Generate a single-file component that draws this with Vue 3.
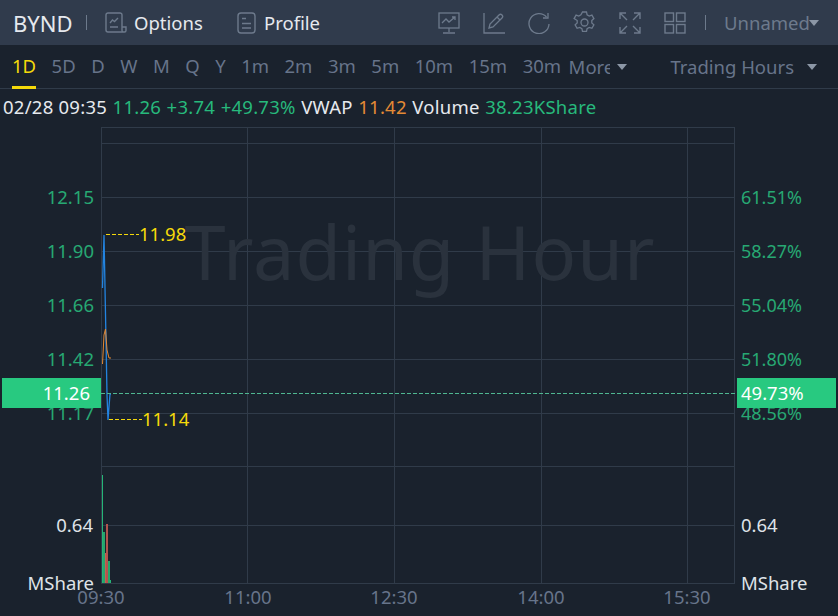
<script setup>
const periods = ['1D', '5D', 'D', 'W', 'M', 'Q', 'Y', '1m', '2m', '3m', '5m', '10m', '15m', '30m']

const hLines = [143, 197, 251, 305, 359, 413, 466, 525]
const vLines = [247, 394, 541, 687]

const leftLabels = [
  { text: '12.15', y: 197 },
  { text: '11.90', y: 251 },
  { text: '11.66', y: 305 },
  { text: '11.42', y: 359 },
  { text: '11.17', y: 413 },
]
const rightLabels = [
  { text: '61.51%', y: 197 },
  { text: '58.27%', y: 251 },
  { text: '55.04%', y: 305 },
  { text: '51.80%', y: 359 },
  { text: '48.56%', y: 413 },
]
const times = [
  { text: '09:30', x: 101 },
  { text: '11:00', x: 248 },
  { text: '12:30', x: 394 },
  { text: '14:00', x: 541 },
  { text: '15:30', x: 687 },
]
</script>

<template>
  <div class="page">
    <header class="topbar">
      <span class="symbol">BYND</span>
      <span class="sep"></span>
      <a class="tab tab-options">
        <svg width="22" height="22" viewBox="0 0 22 22" fill="none" stroke="#6d7a8c" stroke-width="1.4">
          <path d="M17 15V3a2 2 0 0 0-2-2H3a2 2 0 0 0-2 2v15a2 2 0 0 0 2 2h16.500a1.500 1.500 0 0 0 1.500-1.500V15h-4v3.500a1.500 1.500 0 0 0 1.500 1.500" />
          <path d="M5 11l2.500-3 2 1.500L13 6M5 15h8" />
        </svg>
        Options
      </a>
      <a class="tab tab-profile">
        <svg width="19" height="22" viewBox="0 0 19 22" fill="none" stroke="#6d7a8c" stroke-width="1.4">
          <rect x="1" y="1" width="17" height="20" rx="3" />
          <path d="M5 6.500h4M5 11.500h9M5 16h9" />
        </svg>
        Profile
      </a>
      <div class="tools">
        <svg class="t1" width="22" height="22" viewBox="0 0 22 22" fill="none" stroke="#6d7a8c" stroke-width="1.3">
          <rect x="1" y="1" width="20" height="15" />
          <path d="M4 11l4-4 3 3 6-5M14 5h3v3M11 16v4M5 21h12" />
        </svg>
        <svg class="t2" width="22" height="22" viewBox="0 0 22 22" fill="none" stroke="#6d7a8c" stroke-width="1.3">
          <path d="M1 1v20h21" />
          <path d="M6 16l1-4 9-9a1.800 1.800 0 0 1 3 3l-9 9zM14 5l3 3" />
        </svg>
        <svg class="t3" width="22" height="22" viewBox="0 0 22 22" fill="none" stroke="#6d7a8c" stroke-width="1.3">
          <path d="M18.500 5A10 10 0 1 0 21 12" />
          <path d="M20 1v5h-5" />
        </svg>
        <svg class="t4" width="23" height="23" viewBox="0 0 23 23" fill="none" stroke="#6d7a8c" stroke-width="1.3">
          <path d="M9.500 1h4l.6 2.800 2.100 1.200 2.700-.9 2 3.500-2.100 1.900v2.400l2.100 1.900-2 3.500-2.700-.9-2.100 1.200-.6 2.800h-4l-.6-2.800-2.100-1.200-2.700.9-2-3.500 2.100-1.900V9.500L1.100 7.600l2-3.500 2.700.9 2.100-1.200z" />
          <circle cx="11.500" cy="11.500" r="3.500" />
        </svg>
        <svg class="t5" width="22" height="22" viewBox="0 0 22 22" fill="none" stroke="#6d7a8c" stroke-width="1.4">
          <path d="M1 7V1h6M15 1h6v6M21 15v6h-6M7 21H1v-6M1 1l7 7M21 1l-7 7M21 21l-7-7M1 21l7-7" />
        </svg>
        <svg class="t6" width="22" height="22" viewBox="0 0 22 22" fill="none" stroke="#6d7a8c" stroke-width="1.4">
          <rect x="1" y="1" width="8.500" height="8.500" />
          <rect x="12.500" y="1" width="8.500" height="8.500" />
          <rect x="1" y="12.500" width="8.500" height="8.500" />
          <rect x="12.500" y="12.500" width="8.500" height="8.500" />
        </svg>
      </div>
      <span class="sep sep-right"></span>
      <span class="layout-name">Unnamed<i class="caret"></i></span>
    </header>

    <nav class="periods">
      <span v-for="(p, i) in periods" :key="p" class="period" :class="{ active: i === 0 }">{{ p }}</span>
      <span class="more"><span class="more-text">More</span><i class="caret"></i></span>
      <span class="session">Trading Hours<i class="caret"></i></span>
    </nav>

    <div class="quote">
      <span>02/28 09:35</span>
      <span class="green">11.26</span>
      <span class="green">+3.74</span>
      <span class="green">+49.73%</span>
      <span>VWAP</span>
      <span class="orange">11.42</span>
      <span>Volume</span>
      <span class="green">38.23KShare</span>
    </div>

    <svg class="chart" width="838" height="616" viewBox="0 0 838 616">
      <rect x="101.500" y="127.500" width="633" height="456" fill="none" stroke="#303b49" />
      <line v-for="y in hLines" :key="y" x1="101" x2="734" :y1="y + 0.5" :y2="y + 0.5" stroke="#303b49" />
      <line v-for="x in vLines" :key="x" :x1="x + 0.5" :x2="x + 0.5" y1="127" y2="583" stroke="#303b49" />

      <text class="watermark" x="420" y="280" text-anchor="middle">Trading Hour</text>

      <text v-for="l in leftLabels" :key="l.text" class="axis green-fill" x="94" :y="l.y + 7" text-anchor="end">{{ l.text }}</text>
      <text v-for="l in rightLabels" :key="l.text" class="axis pct green-fill" x="741" :y="l.y + 7">{{ l.text }}</text>

      <text class="axis white-fill" x="93" y="532" text-anchor="end">0.64</text>
      <text class="axis white-fill" x="741" y="532">0.64</text>
      <text class="axis white-fill" x="94" y="590" text-anchor="end">MShare</text>
      <text class="axis white-fill" x="741" y="590">MShare</text>

      <text v-for="t in times" :key="t.text" class="axis time-fill" :x="t.x" y="604" text-anchor="middle">{{ t.text }}</text>

      <!-- price + avg lines -->
      <path d="M102.500 288L104 235L106 340L107 395L108 420L110 394H111" fill="none" stroke="#2384e0" stroke-width="1.300" />
      <path d="M102.500 364L104 335L105.500 329L107 350L109 358H111" fill="none" stroke="#e48a35" stroke-width="1" />

      <!-- high / low markers -->
      <line x1="106" x2="139" y1="234.500" y2="234.500" stroke="#f5d90a" stroke-dasharray="4 2" />
      <text class="axis hl" x="139" y="241">11.98</text>
      <line x1="109" x2="142" y1="419.500" y2="419.500" stroke="#f5d90a" stroke-dasharray="4 2" />
      <text class="axis hl" x="142" y="426">11.14</text>

      <!-- last price line -->
      <line x1="101" x2="737" y1="393.500" y2="393.500" stroke="#4fb791" stroke-dasharray="4 2" />

      <!-- volume bars -->
      <rect x="102" y="475" width="1" height="108" fill="#25b577" />
      <rect x="103" y="532" width="2" height="51" fill="#25a56c" />
      <rect x="105" y="553" width="2" height="30" fill="#c95c52" />
      <rect x="106" y="524" width="2" height="59" fill="#b2554d" />
      <rect x="108" y="561" width="2" height="22" fill="#25a56c" />
      <rect x="110" y="580" width="1" height="3" fill="#25b577" />
    </svg>

    <div class="tag tag-left">11.26</div>
    <div class="tag tag-right">49.73%</div>
  </div>
</template>

<style>
html,
body {
  margin: 0;
  background: #1a222d;
}
</style>

<style scoped>
.page {
  position: relative;
  width: 838px;
  height: 616px;
  overflow: hidden;
  background: #1a222d;
  font-family: "Noto Sans", "Open Sans", sans-serif;
  font-size: 18.5px;
}

.topbar {
  display: flex;
  align-items: center;
  height: 45px;
  padding-left: 13px;
  box-sizing: border-box;
  background: #303b4c;
  color: #e6e9ee;
}

.symbol {
  font-size: 22px;
  width: 59px;
  margin-right: 14px;
}

.sep {
  width: 1px;
  height: 15px;
  background: #6d7a8c;
  margin-right: 18px;
}

.tab {
  display: flex;
  align-items: center;
  gap: 7px;
}

.tab-options {
  width: 132px;
}

.tab-profile {
  gap: 8px;
}

.tools {
  display: flex;
  align-items: center;
  gap: 23px;
  margin-left: auto;
}

.sep-right {
  margin-left: 19px;
  margin-right: 18px;
}

.layout-name {
  display: flex;
  align-items: center;
  color: #6d7a8c;
  width: 114px;
}

.layout-name .caret {
  margin-left: -1px;
}

.caret {
  display: inline-block;
  width: 0;
  height: 0;
  border-left: 5px solid transparent;
  border-right: 5px solid transparent;
  border-top: 6px solid #8c97a6;
}

.periods {
  display: flex;
  align-items: center;
  height: 44px;
  box-sizing: border-box;
  padding-left: 12px;
  border-bottom: 1px solid #303b49;
  color: #67748a;
}

.period {
  height: 44px;
  line-height: 42px;
  box-sizing: border-box;
  margin-right: 15.500px;
}

.period.active {
  color: #f5d90a;
  border-bottom: 3px solid #f5d90a;
}

.more {
  display: flex;
  align-items: center;
  margin-left: -8px;
}

.more-text {
  display: inline-block;
  width: 41px;
  overflow: hidden;
}

.more .caret {
  margin-left: 7px;
}

.session {
  display: flex;
  align-items: center;
  margin-left: auto;
  margin-right: 21px;
}

.session .caret {
  margin-left: 13px;
}

.quote {
  display: flex;
  gap: 5.500px;
  align-items: center;
  height: 35px;
  padding-left: 3px;
  color: #e6e9ee;
  letter-spacing: 0.250px;
}

.green {
  color: #27b97c;
}

.orange {
  color: #e48a35;
}

.chart {
  position: absolute;
  left: 0;
  top: 0;
  pointer-events: none;
}

.axis {
  font-size: 18.500px;
}

.pct {
  font-size: 18px;
}

.green-fill {
  fill: #27a873;
}

.white-fill {
  fill: #dfe3e8;
}

.time-fill {
  fill: #67748a;
}

.hl {
  fill: #f5d90a;
}

.watermark {
  font-size: 74px;
  fill: #2a323d;
  letter-spacing: 1px;
}

.tag {
  position: absolute;
  top: 378px;
  height: 30px;
  line-height: 30px;
  background: #28c980;
  color: #fff;
}

.tag-left {
  left: 2px;
  width: 99px;
  box-sizing: border-box;
  text-align: right;
  padding-right: 11px;
}

.tag-right {
  left: 737px;
  width: 99px;
  box-sizing: border-box;
  padding-left: 4px;
}
</style>
